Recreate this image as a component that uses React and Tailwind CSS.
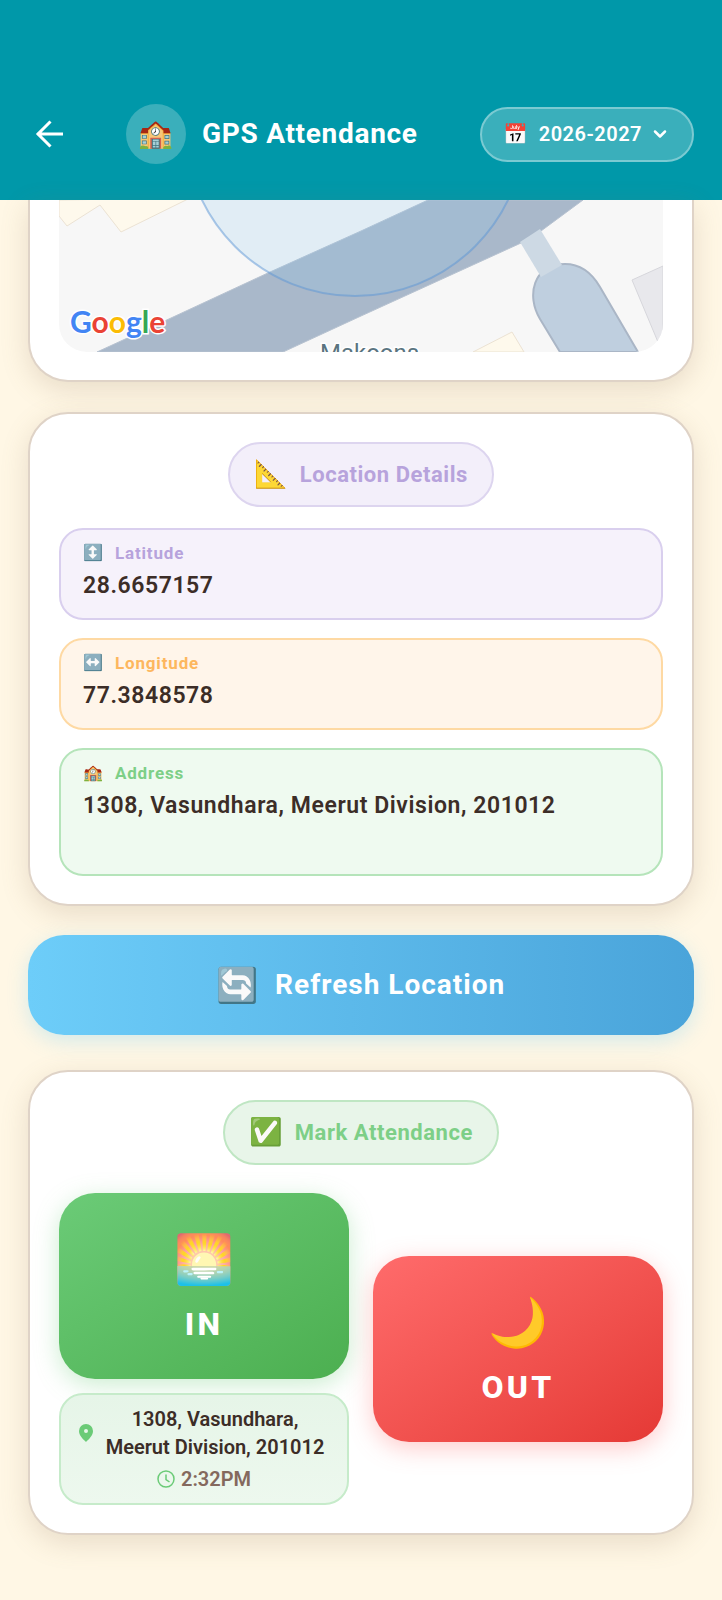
import React from 'react';
import { ChevronDown } from 'lucide-react';

const details = [
  {
    icon: '↕️',
    label: 'Latitude',
    value: '28.6657157',
    box: 'bg-[#f6f2fb] border-[#d9cfee] min-h-[92px]',
    text: 'text-[#b7a3dc]',
  },
  {
    icon: '↔️',
    label: 'Longitude',
    value: '77.3848578',
    box: 'bg-[#fff5ea] border-[#fed9a3] min-h-[92px]',
    text: 'text-[#fdb75e]',
  },
  {
    icon: '🏫',
    label: 'Address',
    value: '1308, Vasundhara, Meerut Division, 201012',
    box: 'bg-[#effaf0] border-[#b5e4ba] min-h-[128px]',
    text: 'text-[#7dcf87]',
  },
];

function Emoji({ children, className }) {
  return <span aria-hidden="true" className={`font-['Noto_Color_Emoji'] font-normal tracking-normal leading-none ${className}`}>{children}</span>;
}

function Header() {
  return (
    <header className="bg-[#0098a9] pt-[68px]">
      <div className="h-[132px] px-7 flex items-center">
        <button aria-label="Back" className="w-[42px] h-[42px] flex items-center justify-center">
          <svg viewBox="0 0 28 28" className="w-7 h-7" fill="none" stroke="#fff" strokeWidth="3">
            <path d="M28 14H2M15.500 1.500L3 14l12.500 12.500" />
          </svg>
        </button>
        <div className="ml-14 w-[60px] h-[60px] rounded-full bg-[#3aafbb] flex items-center justify-center">
          <Emoji className="text-[28px]">🏫</Emoji>
        </div>
        <h1 className="ml-4 text-white text-[28px] font-bold tracking-wide whitespace-nowrap">GPS Attendance</h1>
        <button className="ml-auto h-[55px] px-[22px] rounded-full border-2 border-[#7bcad2] bg-[#3aafbb] flex items-center text-white text-[20px] font-semibold tracking-wide">
          <Emoji className="text-[20px]">📅</Emoji>
          <span className="ml-2.5">2026-2027</span>
          <ChevronDown className="ml-2 w-5 h-5" strokeWidth={3} />
        </button>
      </div>
    </header>
  );
}

function MapView() {
  return (
    <svg viewBox="0 0 604 152" preserveAspectRatio="xMidYMax slice" className="block w-full h-[152px] rounded-b-[28px] bg-[#f7f7f7]">
      <path d="M0 0v16l8 10L41 5l21 27L131-2z" fill="#fef9ec" stroke="#ebe2d3" />
      <path d="M38 152L112 118 211 72 302 31 369 0H524L482 31 462 43 302 116 224 152z" fill="#a9b8ca" stroke="#b7c2d0" />
      <path d="M501 152L481 119C467 96 474 64 506 64c18 0 28 11 35 23l38 65z" fill="#bfcfdf" stroke="#aab6c6" strokeWidth="2" />
      <path d="M461 42l20-13 22 36-21 12z" fill="#cdd9e4" />
      <path d="M573 80l31-14v88z" fill="#e8e8ec" stroke="#d6d6db" />
      <path d="M414 152l39-20 12 20z" fill="#fef9ec" stroke="#ebe2d3" />
      <circle cx="296" cy="-74" r="170" fill="#8cc8ee" fillOpacity="0.2" stroke="#5b95d6" strokeOpacity="0.5" strokeWidth="2" />
      <text x="261" y="161" fontSize="24" fill="#5a7480" stroke="#fff" strokeWidth="3" paintOrder="stroke" className="font-[Roboto,sans-serif]">Makoons</text>
      <text x="11" y="133" fontSize="30" stroke="#fff" strokeWidth="3" paintOrder="stroke" className="font-[Lato,sans-serif] font-bold">
        <tspan fill="#4285f4">G</tspan>
        <tspan fill="#ea4335">o</tspan>
        <tspan fill="#fbbc05">o</tspan>
        <tspan fill="#4285f4">g</tspan>
        <tspan fill="#34a853">l</tspan>
        <tspan fill="#ea4335">e</tspan>
      </text>
    </svg>
  );
}

function Card({ children }) {
  return (
    <section className="rounded-[40px] border-2 border-[#dfd3c7] bg-white px-[29px] py-7 shadow-[0_8px_28px_rgba(139,115,85,0.2)]">
      {children}
    </section>
  );
}

function SectionBadge({ icon, className, children }) {
  return (
    <div className="flex justify-center">
      <h2 className={`h-[65px] px-6 rounded-full border-2 flex items-center gap-3 text-[22px] font-bold tracking-wide ${className}`}>
        <Emoji className="text-[27px]">{icon}</Emoji>
        {children}
      </h2>
    </div>
  );
}

function PunchButton({ icon, className, children }) {
  return (
    <button className={`w-full h-[186px] pt-2 rounded-[36px] flex flex-col items-center justify-center gap-5 text-white text-[32px] leading-10 font-extrabold tracking-widest ${className}`}>
      <Emoji className="text-[48px]">{icon}</Emoji>
      <span>{children}</span>
    </button>
  );
}

export default function App() {
  return (
    <div className="min-h-screen bg-[#fff7e5] font-[Roboto,sans-serif] overflow-hidden">
      <Header />

      <main className="px-7 pb-16">
        <div className="rounded-b-[40px] border-2 border-t-0 border-[#dfd3c7] bg-white px-[29px] pb-7 shadow-[0_8px_28px_rgba(139,115,85,0.2)]">
          <MapView />
        </div>

        <div className="mt-[30px]">
          <Card>
            <SectionBadge icon="📐" className="bg-[#f3effa] border-[#ddd5ef] text-[#b7a3dc]">Location Details</SectionBadge>
            <dl className="mt-[21px] flex flex-col gap-[18px]">
              {details.map((d) => (
                <div key={d.label} className={`rounded-3xl border-2 px-[22px] py-[11px] ${d.box}`}>
                  <dt className={`flex items-center gap-3 text-[17px] leading-6 font-bold tracking-wider ${d.text}`}>
                    <Emoji className="text-[16px]">{d.icon}</Emoji>
                    {d.label}
                  </dt>
                  <dd className="mt-[5px] text-[23px] leading-8 font-semibold tracking-wide text-[#3c2d27]">{d.value}</dd>
                </div>
              ))}
            </dl>
          </Card>
        </div>

        <button className="mt-[29px] w-full h-[100px] rounded-[36px] bg-linear-to-r from-[#6dcdf9] to-[#4aa4da] shadow-[0_6px_20px_rgba(109,205,249,0.3)] flex items-center justify-center gap-4 text-white text-[28px] font-bold tracking-[1px]">
          <Emoji className="text-[34px]">🔄</Emoji>
          Refresh Location
        </button>

        <div className="mt-[35px]">
          <Card>
            <SectionBadge icon="✅" className="bg-[#e8f5e9] border-[#bfe6c3] text-[#7dcf87]">Mark Attendance</SectionBadge>
            <div className="mt-7 grid grid-cols-2 gap-6 items-center">
              <div>
                <PunchButton icon="🌅" className="bg-linear-to-br from-[#6bcb77] to-[#4caf50] shadow-[0_6px_24px_rgba(107,203,119,0.35)]">IN</PunchButton>
                <div className="mt-3.5 rounded-3xl border-2 border-[#c6ebca] bg-linear-to-b from-[#e6f5e8] to-[#edf8ee] px-[18px] py-2.5">
                  <div className="flex items-center gap-2">
                    <svg viewBox="0 0 14 18" className="w-3.5 h-[18px] shrink-0" fill="#6bcb77">
                      <path fillRule="evenodd" d="M7 0a7 7 0 0 0-7 7c0 4.500 4 8 7 11 3-3 7-6.500 7-11a7 7 0 0 0-7-7zm0 5a2 2 0 1 1 0 4 2 2 0 0 1 0-4z" />
                    </svg>
                    <p className="flex-1 text-center text-[20px] leading-7 font-semibold text-[#3c2d27]">
                      1308, Vasundhara,<br />Meerut Division, 201012
                    </p>
                  </div>
                  <p className="mt-1 flex items-center justify-center gap-1.5 text-[20px] leading-7 font-semibold text-[#84695d]">
                    <svg viewBox="0 0 18 18" className="w-[18px] h-[18px]" fill="none" stroke="#6bcb77" strokeWidth="1.500">
                      <circle cx="9" cy="9" r="8" />
                      <path d="M9 4.500V9.500l3.500 2.500" />
                    </svg>
                    2:32PM
                  </p>
                </div>
              </div>
              <PunchButton icon="🌙" className="bg-linear-to-br from-[#ff6b6b] to-[#e53935] shadow-[0_6px_24px_rgba(255,107,107,0.35)]">OUT</PunchButton>
            </div>
          </Card>
        </div>
      </main>
    </div>
  );
}
